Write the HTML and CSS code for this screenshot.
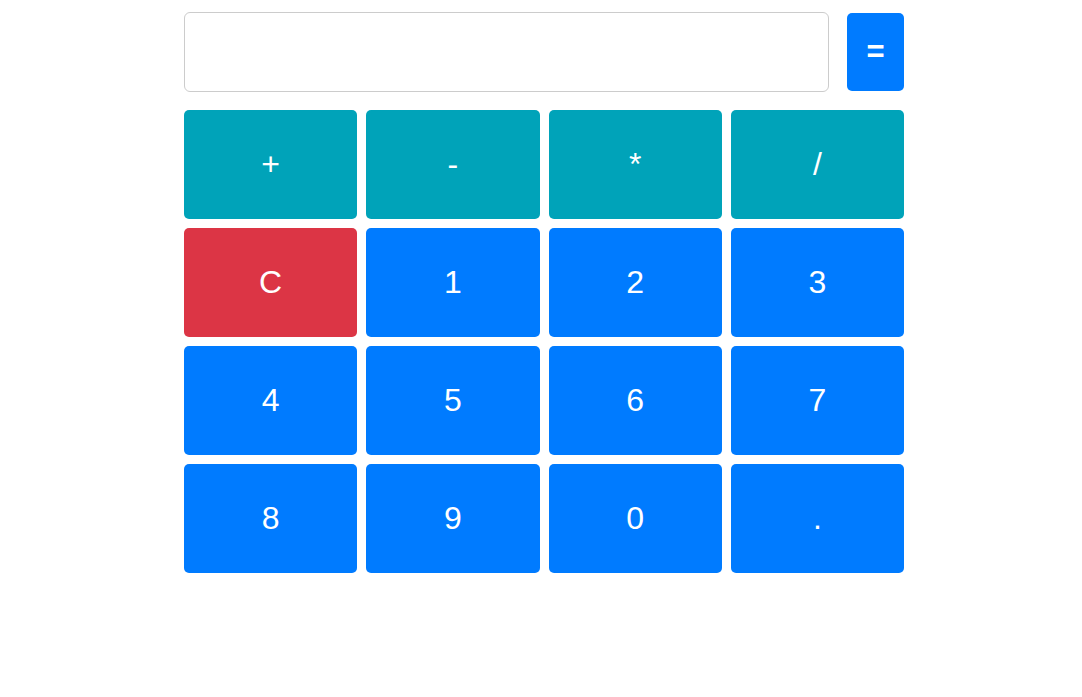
FILE: index.html
```html
<!DOCTYPE html>
<html>
<head>
<meta charset="utf-8">
<link rel="stylesheet" href="styles.css">
</head>
<body>
<div class="calc">
  <div class="top">
    <input class="display" type="text">
    <button class="btn eq">=</button>
  </div>
  <div class="keys">
    <button class="btn op">+</button>
    <button class="btn op">-</button>
    <button class="btn op">*</button>
    <button class="btn op">/</button>
    <button class="btn clr">C</button>
    <button class="btn num">1</button>
    <button class="btn num">2</button>
    <button class="btn num">3</button>
    <button class="btn num">4</button>
    <button class="btn num">5</button>
    <button class="btn num">6</button>
    <button class="btn num">7</button>
    <button class="btn num">8</button>
    <button class="btn num">9</button>
    <button class="btn num">0</button>
    <button class="btn num">.</button>
  </div>
</div>
</body>
</html>
```
FILE: styles.css
```css
html, body {
  margin: 0;
  padding: 0;
  background: #fff;
  font-family: "Liberation Sans", Arial, sans-serif;
}
.calc {
  width: 720px;
  margin: 12px 0 0 184px;
}
.top {
  display: flex;
  align-items: center;
  gap: 18px;
  height: 80px;
}
.display {
  flex: 1;
  box-sizing: border-box;
  height: 80px;
  border: 1px solid #ccc;
  border-radius: 6px;
  margin: 0;
  padding: 0 12px;
  font-size: 30px;
  font-family: inherit;
  outline: none;
}
.btn {
  border: none;
  border-radius: 5px;
  color: #fff;
  font-family: inherit;
  cursor: pointer;
  margin: 0;
  padding: 0;
}
.eq {
  width: 57px;
  height: 78px;
  background: #007bff;
  font-size: 31px;
  font-weight: bold;
}
.keys {
  display: grid;
  grid-template-columns: repeat(4, 1fr);
  grid-auto-rows: 109px;
  gap: 9px;
  margin-top: 18px;
}
.keys .btn {
  font-size: 32px;
}
.op { background: #00a3b9; }
.clr { background: #dc3545; }
.num { background: #007bff; }
```
